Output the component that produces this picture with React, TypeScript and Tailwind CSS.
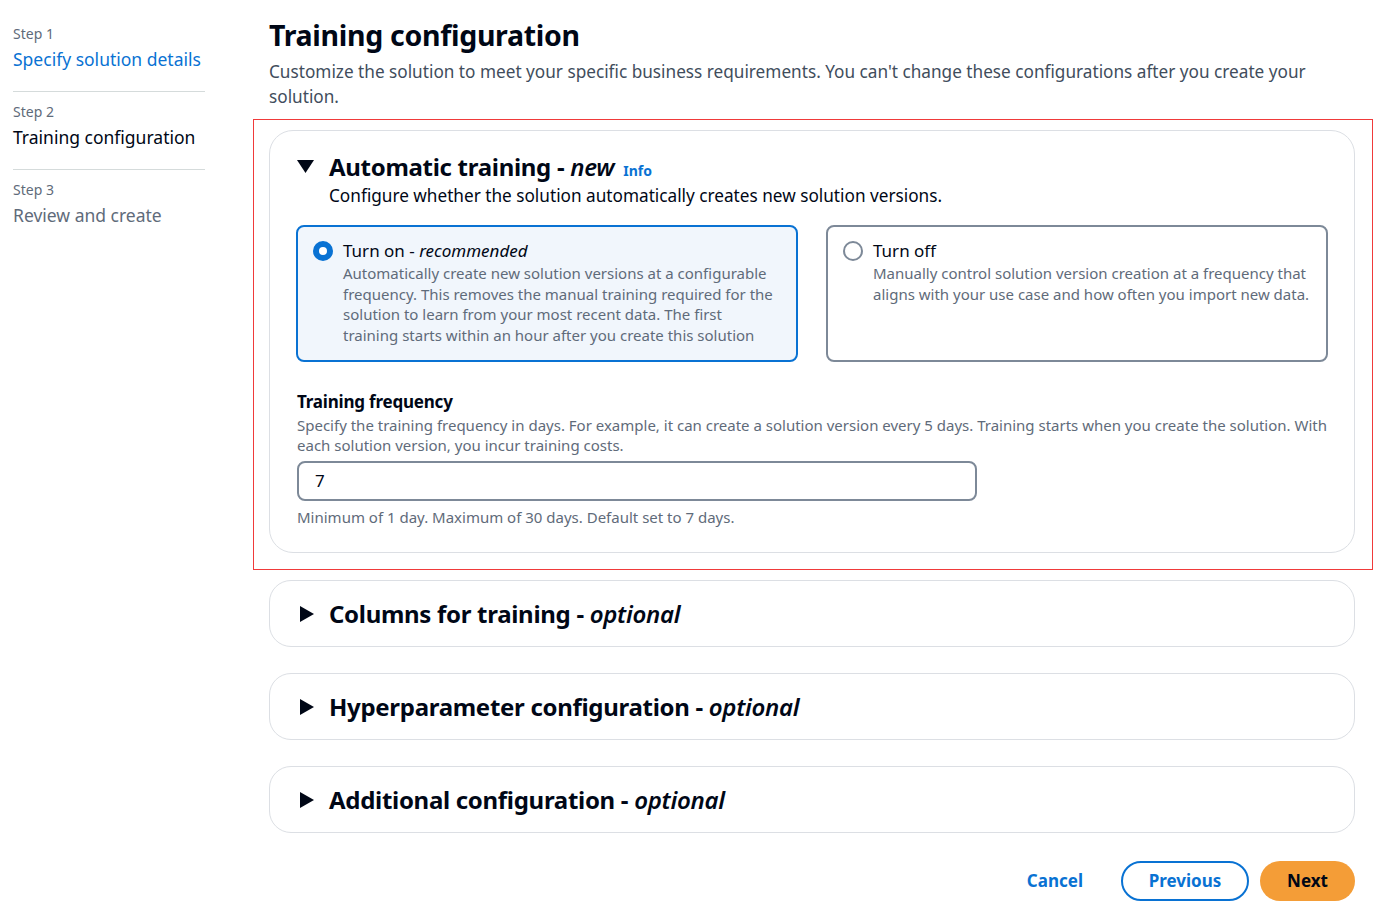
import React from "react";

const font = { fontFamily: '"Noto Sans", "Open Sans", Arial, sans-serif' };

function CaretDown() {
  return (
    <svg width="17" height="14" viewBox="0 0 17 14" className="shrink-0">
      <polygon points="0,0 17,0 8.5,13" fill="#000716" />
    </svg>
  );
}

function CaretRight() {
  return (
    <svg width="14" height="16" viewBox="0 0 14 16" className="shrink-0">
      <polygon points="0,0 14,8 0,16" fill="#000716" />
    </svg>
  );
}

function Collapsed({ title }: { title: string }) {
  return (
    <div className="h-[67px] rounded-[22px] border border-[#dcdfe4] flex items-center pl-[30px] gap-[15px]">
      <CaretRight />
      <div className="text-[24px] font-bold text-[#000716] tracking-[-0.3px]">
        {title} - <span className="italic font-semibold">optional</span>
      </div>
    </div>
  );
}

export default function App() {
  return (
    <div className="w-[1386px] h-[910px] bg-white flex text-[#000716] overflow-hidden" style={font}>
      {/* Left nav */}
      <nav className="w-[192px] ml-[13px] pt-[24px] shrink-0">
        <div className="pb-[18px] border-b border-[#d5dbdb]">
          <div className="text-[14px] text-[#5f6b7a] leading-[20px]">Step 1</div>
          <div className="text-[17.5px] text-[#0972d3] leading-[28px] mt-[1px]">Specify solution details</div>
        </div>
        <div className="pt-[10px] pb-[18px] border-b border-[#d5dbdb]">
          <div className="text-[14px] text-[#5f6b7a] leading-[20px]">Step 2</div>
          <div className="text-[17.5px] text-[#000716] leading-[28px] mt-[1px]">Training configuration</div>
        </div>
        <div className="pt-[10px]">
          <div className="text-[14px] text-[#5f6b7a] leading-[20px]">Step 3</div>
          <div className="text-[17.5px] text-[#5f6b7a] leading-[28px] mt-[1px]">Review and create</div>
        </div>
      </nav>

      {/* Main */}
      <main className="ml-[64px] w-[1086px] shrink-0 pt-[16px]">
        <h1 className="text-[28.5px] font-bold leading-[38px] tracking-[-0.3px]">Training configuration</h1>
        <p className="text-[17.2px] leading-[25px] text-[#414d5c] mt-[5px]">
          Customize the solution to meet your specific business requirements. You can't change these configurations after you create your solution.
        </p>

        <div className="mt-[10px] ml-[-16px] mr-[-18px] border border-[#f03a3a] pl-[15px] pr-[17px] pt-[10px] pb-[16px]">
          <div className="rounded-[24px] border border-[#dcdfe4] pl-[26px] pr-[26px] pt-[20px] pb-[25px]">
            <div className="flex items-center gap-[15px] ml-[1px]">
              <CaretDown />
              <div className="flex items-baseline gap-[9px]">
                <span className="text-[24px] font-bold leading-[32px] tracking-[-0.3px]">
                  Automatic training - <span className="italic font-semibold">new</span>
                </span>
                <span className="text-[14px] font-bold text-[#0972d3]">Info</span>
              </div>
            </div>
            <div className="ml-[33px] text-[17.2px] leading-[24px] text-[#000716] mt-[1px]">
              Configure whether the solution automatically creates new solution versions.
            </div>

            <div className="flex gap-[28px] mt-[17px]">
              <div className="w-[502px] h-[137px] rounded-[8px] border-2 border-[#0972d3] bg-[#f1f6fc] flex gap-[10px] pl-[15px] pr-[22px] pt-[12px]">
                <div className="w-[20px] h-[20px] rounded-full border-[6px] border-[#0972d3] bg-white shrink-0 mt-[2px]" />
                <div>
                  <div className="text-[17px] leading-[24px]">
                    Turn on - <span className="italic">recommended</span>
                  </div>
                  <div className="text-[15px] leading-[20.5px] text-[#5f6b7a]">
                    Automatically create new solution versions at a configurable frequency. This removes the manual training required for the solution to learn from your most recent data. The first training starts within an hour after you create this solution
                  </div>
                </div>
              </div>
              <div className="w-[502px] h-[137px] rounded-[8px] border-2 border-[#7d8998] bg-white flex gap-[10px] pl-[15px] pr-[14px] pt-[12px]">
                <div className="w-[20px] h-[20px] rounded-full border-2 border-[#7d8998] bg-white shrink-0 mt-[2px]" />
                <div>
                  <div className="text-[17px] leading-[24px]">Turn off</div>
                  <div className="text-[15px] leading-[20.5px] text-[#5f6b7a]">
                    Manually control solution version creation at a frequency that aligns with your use case and how often you import new data.
                  </div>
                </div>
              </div>
            </div>

            <div className="mt-[29px] ml-[1px]">
              <div className="text-[17px] font-bold leading-[22px] tracking-[-0.2px]">Training frequency</div>
              <div className="text-[15px] leading-[20px] text-[#5f6b7a] mt-[2px]">
                Specify the training frequency in days. For example, it can create a solution version every 5 days. Training starts when you create the solution. With each solution version, you incur training costs.
              </div>
              <div className="mt-[6px] w-[680px] h-[40px] rounded-[8px] border-2 border-[#7d8998] flex items-center pl-[16px] text-[17px]">
                7
              </div>
              <div className="text-[15px] leading-[20px] text-[#5f6b7a] mt-[6px]">
                Minimum of 1 day. Maximum of 30 days. Default set to 7 days.
              </div>
            </div>
          </div>
        </div>

        <div className="mt-[10px] flex flex-col gap-[26px]">
          <Collapsed title="Columns for training" />
          <Collapsed title="Hyperparameter configuration" />
          <Collapsed title="Additional configuration" />
        </div>

        <div className="flex justify-end items-center mt-[28px]">
          <button className="text-[17px] font-bold text-[#0972d3] mr-[38px]">Cancel</button>
          <button className="w-[128px] h-[40px] rounded-full border-2 border-[#0972d3] text-[17px] font-bold text-[#0972d3] mr-[11px]">Previous</button>
          <button className="w-[95px] h-[40px] rounded-full bg-[#f49d37] text-[17px] font-bold text-[#000716]">Next</button>
        </div>
      </main>
    </div>
  );
}
